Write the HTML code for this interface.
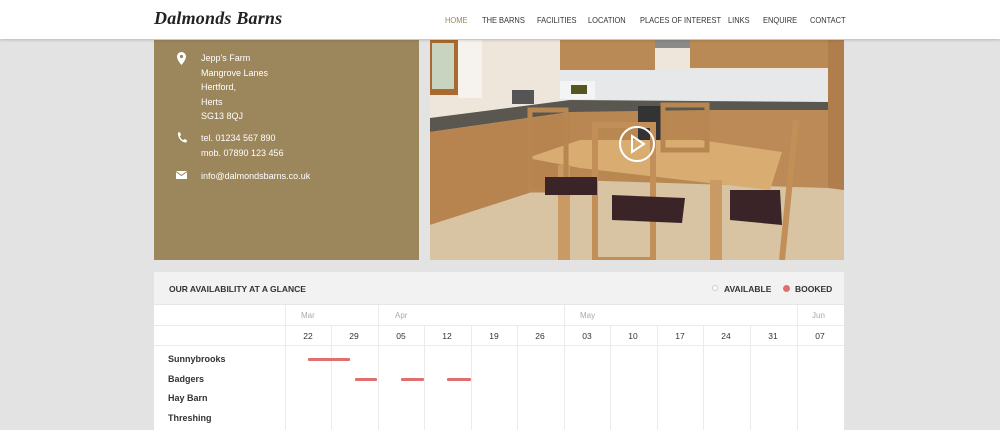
<!DOCTYPE html>
<html><head><meta charset="utf-8"><style>
*{margin:0;padding:0;box-sizing:border-box}
html,body{width:1000px;height:430px;overflow:hidden}
body{background:#e3e3e3;font-family:"Liberation Sans",sans-serif;position:relative}
.hdr{position:absolute;left:0;top:0;width:1000px;height:39px;background:#fff;box-shadow:0 1px 3px rgba(0,0,0,.2);z-index:2}
.logo{position:absolute;left:154px;top:8px;font-family:"Liberation Serif",serif;font-style:italic;font-weight:bold;font-size:18px;color:#222;letter-spacing:.2px}
.nav{position:absolute;top:15px;font-size:8.5px;color:#333;transform:scaleX(.88);transform-origin:0 0;white-space:nowrap}
.info{position:absolute;left:154px;top:40px;width:265px;height:220px;background:#9c865c;color:#fff;font-size:9px}
.info .t{position:absolute;left:47px;line-height:14.6px}
.photo{position:absolute;left:430px;top:40px;width:414px;height:220px;overflow:hidden}
.cal{position:absolute;left:154px;top:272px;width:690px;height:158px;background:#fff}
.ch{height:33px;background:#f2f2f2;border-bottom:1px solid #e6e6e6;position:relative}
.ab{position:absolute;font-size:8.5px;font-weight:bold;color:#333}
.vl{position:absolute;width:1px;background:#ebebeb}
.hl{position:absolute;height:1px;background:#ebebeb}
.m{position:absolute;top:39px;font-size:8px;color:#aaa}
.d{position:absolute;top:59px;font-size:8.5px;color:#333;width:46px;text-align:center}
.r{position:absolute;left:14px;font-size:9px;font-weight:bold;color:#333}
.bk{position:absolute;height:3px;background:#e07070;border-radius:1px}
</style></head><body>
<div class="hdr">
<div class="logo">Dalmonds Barns</div>
<div class="nav" style="left:445px;color:#9c865c">HOME</div>
<div class="nav" style="left:482px">THE BARNS</div>
<div class="nav" style="left:537px">FACILITIES</div>
<div class="nav" style="left:588px">LOCATION</div>
<div class="nav" style="left:640px">PLACES OF INTEREST</div>
<div class="nav" style="left:728px">LINKS</div>
<div class="nav" style="left:763px">ENQUIRE</div>
<div class="nav" style="left:810px">CONTACT</div>
</div>
<div class="info">
<svg style="position:absolute;left:23px;top:12px" width="9" height="13" viewBox="0 0 9 13"><path d="M4.5 0A4.5 4.5 0 0 0 0 4.5C0 8 4.5 13 4.5 13S9 8 9 4.5A4.5 4.5 0 0 0 4.5 0z" fill="#fff"/><circle cx="4.5" cy="4.5" r="1.6" fill="#9c865c"/></svg>
<div class="t" style="top:11px">Jepp's Farm<br>Mangrove Lanes<br>Hertford,<br>Herts<br>SG13 8QJ</div>
<svg style="position:absolute;left:23px;top:92px" width="10" height="11" viewBox="0 0 10 11"><path d="M1 0.5L3 0.3 4 3 2.8 4.2C3.5 6 4.6 7.3 6.2 8.2L7.4 7 10 8.2 9.6 10.4C5 11 0.5 6 1 0.5z" fill="#fff"/></svg>
<div class="t" style="top:91px">tel. 01234 567 890<br>mob. 07890 123 456</div>
<svg style="position:absolute;left:22px;top:131px" width="11" height="8" viewBox="0 0 11 8"><rect width="11" height="8" fill="#fff"/><path d="M0 0.5L5.5 4.5 11 0.5" stroke="#9c865c" fill="none" stroke-width="1"/></svg>
<div class="t" style="top:129px">info@dalmondsbarns.co.uk</div>
</div>
<div class="photo">
<svg width="414" height="220" viewBox="0 0 414 220">
<rect width="414" height="220" fill="#eee6da"/>
<rect x="0" y="0" width="28" height="55" fill="#a86a30"/><rect x="2" y="3" width="22" height="46" fill="#c9d4c0"/>
<rect x="28" y="0" width="24" height="58" fill="#f6f3ee"/>
<rect x="130" y="30" width="268" height="34" fill="#e6e8ea"/>
<rect x="130" y="0" width="95" height="30" fill="#b98a55"/>
<rect x="225" y="0" width="35" height="8" fill="#8a8a88"/>
<rect x="260" y="0" width="138" height="28" fill="#b98a55"/>
<rect x="398" y="0" width="16" height="220" fill="#b07e4c"/>
<rect x="130" y="41" width="35" height="18" fill="#f4f4f4"/><rect x="141" y="45" width="16" height="9" fill="#552"/>
<rect x="82" y="50" width="22" height="14" fill="#555"/>
<polygon points="0,78 140,60 398,62 398,76 140,72 0,92" fill="#5a5650"/>
<polygon points="0,92 140,72 140,140 0,185" fill="#b7834f"/>
<polygon points="140,72 278,70 278,148 140,140" fill="#b98852"/>
<rect x="208" y="66" width="26" height="34" fill="#333"/>
<rect x="278" y="70" width="120" height="80" fill="#bb8a56"/>
<polygon points="0,185 140,140 398,148 414,150 414,220 0,220" fill="#d8c3a2"/>
<polygon points="97,118 150,100 270,100 352,112 340,150 150,128" fill="#d9ad72"/>
<rect x="128" y="125" width="12" height="95" fill="#c99a63"/>
<rect x="280" y="140" width="12" height="80" fill="#c99a63"/>
<rect x="100" y="70" width="36" height="80" fill="none" stroke="#b88650" stroke-width="5"/>
<rect x="233" y="65" width="44" height="45" fill="none" stroke="#b88650" stroke-width="5"/>
<rect x="165" y="85" width="58" height="135" fill="none" stroke="#c28f58" stroke-width="6"/>
<rect x="115" y="137" width="52" height="18" fill="#3a2428"/>
<polygon points="182,155 255,158 252,183 182,180" fill="#3a2428"/>
<polygon points="300,150 350,150 352,185 300,180" fill="#3a2428"/>
<line x1="366" y1="80" x2="352" y2="220" stroke="#c28f58" stroke-width="6"/>
<circle cx="207" cy="104" r="17" fill="none" stroke="#fff" stroke-width="2"/>
<polygon points="202,96 202,112 214,104" fill="none" stroke="#fff" stroke-width="2"/>
</svg>
</div>
<div class="cal">
<div class="ch"><div class="ab" style="left:15px;top:12px">OUR AVAILABILITY AT A GLANCE</div>
<div style="position:absolute;left:558px;top:13px;width:6px;height:6px;border:1px solid #ccc;border-radius:50%;background:#fff"></div>
<div class="ab" style="left:570px;top:12px">AVAILABLE</div>
<div style="position:absolute;left:629px;top:13px;width:7px;height:7px;border-radius:50%;background:#e07070"></div>
<div class="ab" style="left:641px;top:12px">BOOKED</div></div>
<div class="hl" style="left:0;top:53px;width:690px"></div>
<div class="hl" style="left:0;top:73px;width:690px"></div>
<div class="vl" style="left:131px;top:33px;height:140px"></div>
<div class="vl" style="left:224px;top:33px;height:140px"></div>
<div class="vl" style="left:410px;top:33px;height:140px"></div>
<div class="vl" style="left:643px;top:33px;height:140px"></div>
<div class="vl" style="left:177px;top:53px;height:120px"></div>
<div class="vl" style="left:270px;top:53px;height:120px"></div>
<div class="vl" style="left:317px;top:53px;height:120px"></div>
<div class="vl" style="left:363px;top:53px;height:120px"></div>
<div class="vl" style="left:456px;top:53px;height:120px"></div>
<div class="vl" style="left:503px;top:53px;height:120px"></div>
<div class="vl" style="left:549px;top:53px;height:120px"></div>
<div class="vl" style="left:596px;top:53px;height:120px"></div>
<div class="m" style="left:147px">Mar</div><div class="m" style="left:241px">Apr</div><div class="m" style="left:426px">May</div><div class="m" style="left:658px">Jun</div>
<div class="d" style="left:131px">22</div><div class="d" style="left:177px">29</div><div class="d" style="left:224px">05</div><div class="d" style="left:270px">12</div><div class="d" style="left:317px">19</div><div class="d" style="left:363px">26</div><div class="d" style="left:410px">03</div><div class="d" style="left:456px">10</div><div class="d" style="left:503px">17</div><div class="d" style="left:549px">24</div><div class="d" style="left:596px">31</div><div class="d" style="left:643px">07</div>
<div class="r" style="top:82px">Sunnybrooks</div><div class="r" style="top:102px">Badgers</div><div class="r" style="top:121px">Hay Barn</div><div class="r" style="top:141px">Threshing</div>
<div class="bk" style="left:154px;top:86px;width:42px"></div>
<div class="bk" style="left:201px;top:106px;width:22px"></div>
<div class="bk" style="left:247px;top:106px;width:23px"></div>
<div class="bk" style="left:293px;top:106px;width:24px"></div>
</div>
</body></html>
